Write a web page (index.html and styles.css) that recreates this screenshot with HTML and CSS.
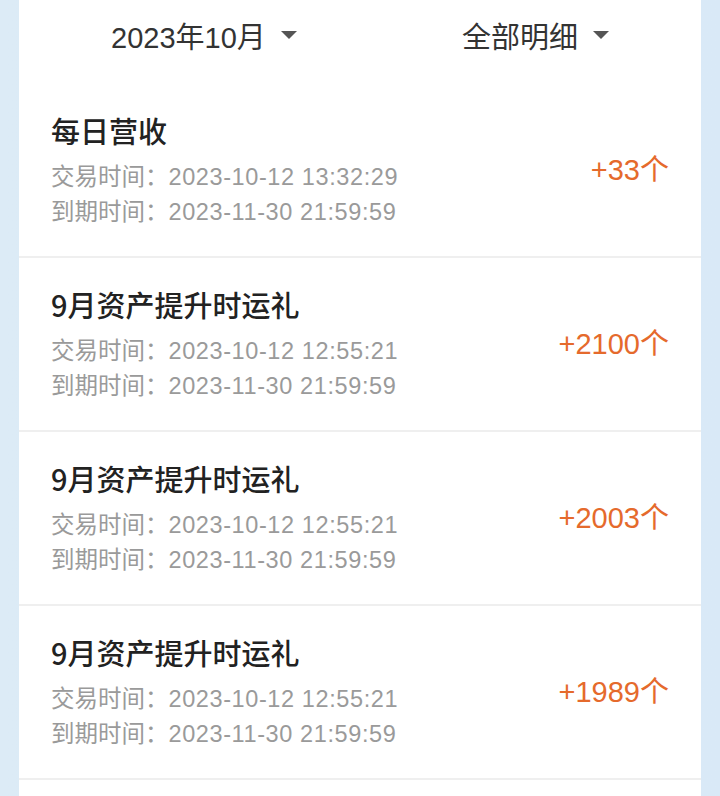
FILE: index.html
```html
<!DOCTYPE html>
<html>
    <head>
        <meta charset="utf-8">
        <title>明细</title>
        <link rel="stylesheet" href="styles.css">
    </head>
    <body>
        <div id="panel">
            <div class="filters">
                <div class="filter filter-month">2023年10月<span class="caret"></span></div>
                <div class="filter filter-type">全部明细<span class="caret"></span></div>
            </div>

            <div class="record">
                <div class="info">
                    <p class="title">每日营收</p>
                    <p class="time">交易时间：<span class="date">2023-10-12 13:32:29</span></p>
                    <p class="time">到期时间：<span class="date">2023-11-30 21:59:59</span></p>
                </div>
                <div class="amount">+33个</div>
            </div>
            <div class="record">
                <div class="info">
                    <p class="title">9月资产提升时运礼</p>
                    <p class="time">交易时间：<span class="date">2023-10-12 12:55:21</span></p>
                    <p class="time">到期时间：<span class="date">2023-11-30 21:59:59</span></p>
                </div>
                <div class="amount">+2100个</div>
            </div>
            <div class="record">
                <div class="info">
                    <p class="title">9月资产提升时运礼</p>
                    <p class="time">交易时间：<span class="date">2023-10-12 12:55:21</span></p>
                    <p class="time">到期时间：<span class="date">2023-11-30 21:59:59</span></p>
                </div>
                <div class="amount">+2003个</div>
            </div>
            <div class="record">
                <div class="info">
                    <p class="title">9月资产提升时运礼</p>
                    <p class="time">交易时间：<span class="date">2023-10-12 12:55:21</span></p>
                    <p class="time">到期时间：<span class="date">2023-11-30 21:59:59</span></p>
                </div>
                <div class="amount">+1989个</div>
            </div>
        </div>
    </body>
</html>
```

FILE: styles.css
```css
html, body {
    height: 100%;
}
body {
    margin: 0;
    background: linear-gradient(90deg, #dcebf6 0%, #d9e9f7 100%);
    font-family: 'Liberation Sans', 'Noto Sans CJK SC', sans-serif;
    overflow: hidden;
}

#panel {
    margin: 0 19px;
    background-color: #FFF;
    min-height: 100%;
}

.filters {
    display: flex;
    height: 84px;
    padding-top: 17px;
    box-sizing: border-box;
}
.filter {
    flex: 1;
    display: flex;
    align-items: center;
    height: 36px;
    font-size: 29px;
    color: #333;
}
.filter-month {
    padding-left: 92px;
}
.filter-type {
    padding-left: 112px;
}
.caret {
    margin-left: 15px;
    border-left: 8px solid transparent;
    border-right: 8px solid transparent;
    border-top: 8px solid #555;
}

.record {
    display: flex;
    align-items: center;
    padding: 32px 32px 26px 32px;
    border-bottom: 2px solid #efefef;
}
.info {
    flex: 1;
}
.info p {
    margin: 0;
}
.title {
    height: 36px;
    line-height: 28px;
    margin-bottom: 8px !important;
    font-family: 'Noto Sans CJK SC', sans-serif;
    font-size: 29px;
    font-weight: 500;
    color: #222;
}
.time {
    height: 35px;
    line-height: 35px;
    font-size: 23.5px;
    color: #9a9a9a;
}
.date {
    letter-spacing: 0.6px;
}
.amount {
    font-size: 29px;
    color: #e56a2c;
    padding-bottom: 12px;
}
```
